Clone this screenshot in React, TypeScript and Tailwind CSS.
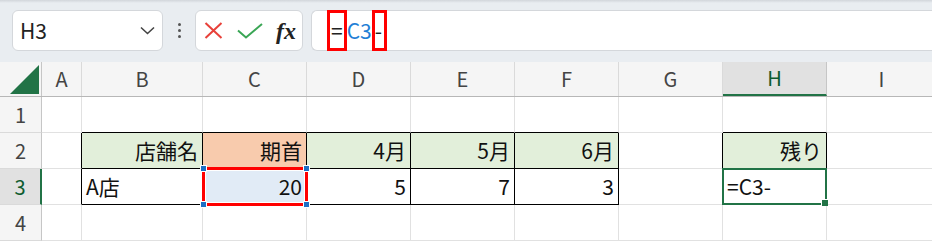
import React from "react";

const COLS = [
  { key: "A", w: "w-[40px]" },
  { key: "B", w: "w-[121px]" },
  { key: "C", w: "w-[104px]" },
  { key: "D", w: "w-[104px]" },
  { key: "E", w: "w-[104px]" },
  { key: "F", w: "w-[104px]" },
  { key: "G", w: "w-[104px]" },
  { key: "H", w: "w-[104px]" },
  { key: "I", w: "w-[110px]" },
];

type Cell = { text?: string; align?: "left" | "right"; fill?: string };

const DATA: Record<string, Cell> = {
  B2: { text: "店舗名", align: "right", fill: "bg-[#e2efda]" },
  C2: { text: "期首", align: "right", fill: "bg-[#f8cbad]" },
  D2: { text: "4月", align: "right", fill: "bg-[#e2efda]" },
  E2: { text: "5月", align: "right", fill: "bg-[#e2efda]" },
  F2: { text: "6月", align: "right", fill: "bg-[#e2efda]" },
  H2: { text: "残り", align: "right", fill: "bg-[#e2efda]" },
  B3: { text: "A店", align: "left" },
  C3: { text: "20", align: "right", fill: "bg-[#e1ebf6]" },
  D3: { text: "5", align: "right" },
  E3: { text: "7", align: "right" },
  F3: { text: "3", align: "right" },
  H3: { text: "=C3-", align: "left" },
};

const inTable = (row: number, col: number) => {
  const k = COLS[col]?.key;
  if (!k) return false;
  if (row === 2 || row === 3) return ["B", "C", "D", "E", "F", "H"].includes(k);
  return false;
};

const Handle = ({ pos }: { pos: string }) => (
  <span className={`absolute w-[7px] h-[7px] bg-[#1e6fc5] border border-white ${pos}`} />
);

function NameBox() {
  return (
    <div className="w-[151px] shrink-0 h-[41px] bg-white rounded-[6px] border border-[#d4d7db] flex items-center pl-[7px] pr-[7px]">
      <span className="text-[21px] text-[#222] flex-1">H3</span>
      <svg width="15" height="9" viewBox="0 0 15 9" fill="none">
        <path d="M1 1.5 L7.5 7.5 L14 1.5" stroke="#444" strokeWidth="1.6" />
      </svg>
    </div>
  );
}

function FormulaButtons() {
  return (
    <div className="w-[108px] shrink-0 h-[41px] bg-white rounded-[6px] border border-[#d4d7db] flex items-center pl-[8px] gap-[14px]">
      <svg width="19" height="17" viewBox="0 0 19 17" fill="none">
        <path d="M1.5 1 L17.5 16 M17.5 1 L1.5 16" stroke="#e8413a" strokeWidth="2" />
      </svg>
      <svg width="26" height="16" viewBox="0 0 26 16" fill="none">
        <path d="M1 7.5 L9 14.5 L25 1" stroke="#3aa655" strokeWidth="2" />
      </svg>
      <span
        className="text-[24px] italic font-bold text-[#222] leading-none -ml-[1px]"
        style={{ fontFamily: '"Liberation Serif", serif' }}
      >
        fx
      </span>
    </div>
  );
}

function FormulaBar() {
  return (
    <div className="flex-1 h-[41px] bg-white rounded-l-[6px] border border-r-0 border-[#d4d7db] flex items-stretch pl-[15px] text-[21px] -mr-[4px]">
      <span className="flex items-center border-[3px] border-[#ff0000] px-[1px] -my-[1px] text-[#222]">=</span>
      <span className="flex items-center text-[#1f7fd6]">C3</span>
      <span className="flex items-center border-[3px] border-[#ff0000] -my-[1px] pr-[2px] text-[#222]">-</span>
    </div>
  );
}

export default function App() {
  const rows = [1, 2, 3, 4];
  return (
    <div
      className="w-[932px] h-[242px] overflow-hidden bg-white"
      style={{ fontFamily: '"Noto Sans CJK JP", "Noto Sans", sans-serif' }}
    >
      {/* toolbar */}
      <div className="h-[62px] bg-[#e9edf1] relative overflow-hidden">
        <div className="h-[3px] bg-gradient-to-b from-[#d2d6db] to-[#e9edf1]" />
        <div className="flex items-center pl-[12px] pt-[7px]">
          <NameBox />
          <div className="w-[32px] shrink-0 flex flex-col items-center gap-[3px]">
            <span className="w-[3px] h-[3px] rounded-full bg-[#555]" />
            <span className="w-[3px] h-[3px] rounded-full bg-[#555]" />
            <span className="w-[3px] h-[3px] rounded-full bg-[#555]" />
          </div>
          <FormulaButtons />
          <div className="w-[8px] shrink-0" />
          <FormulaBar />
        </div>
      </div>

      {/* column header */}
      <div className="flex h-[35px] bg-[#f5f5f5] border-b border-[#b7b7b7]">
        <div className="w-[42px] shrink-0 h-full border-r border-[#c6c6c6] flex items-end justify-end pr-[2px] pb-[2px]">
          <svg width="29" height="29" viewBox="0 0 29 29">
            <path d="M29 0 L29 29 L0 29 Z" fill="#217346" />
          </svg>
        </div>
        {COLS.map((c) =>
          c.key === "H" ? (
            <div
              key={c.key}
              className={`${c.w} shrink-0 h-full bg-[#e1e1e1] border-r border-[#c6c6c6] border-b-2 border-b-[#217346] flex items-center justify-center text-[20px] text-[#0e5c2f]`}
            >
              {c.key}
            </div>
          ) : (
            <div
              key={c.key}
              className={`${c.w} shrink-0 h-full border-r border-[#dadada] flex items-center justify-center text-[20px] text-[#444]`}
            >
              {c.key}
            </div>
          )
        )}
      </div>

      {/* rows */}
      {rows.map((r) => (
        <div key={r} className="flex h-[36px]">
          {r === 3 ? (
            <div className="w-[42px] shrink-0 h-full bg-[#e1e1e1] border-r-2 border-r-[#217346] border-b border-b-[#dadada] flex items-center justify-center text-[20px] text-[#0e5c2f]">
              {r}
            </div>
          ) : (
            <div className="w-[42px] shrink-0 h-full bg-[#f5f5f5] border-r border-r-[#c6c6c6] border-b border-b-[#dadada] flex items-center justify-center text-[20px] text-[#444]">
              {r}
            </div>
          )}
          {COLS.map((c, ci) => {
            const id = `${c.key}${r}`;
            const cell = DATA[id] || {};
            const rBlack = inTable(r, ci) || inTable(r, ci + 1);
            const bBlack = inTable(r, ci) || inTable(r + 1, ci);
            const rCls = rBlack ? "border-r-black" : "border-r-[#e1e1e1]";
            const bCls = bBlack ? "border-b-black" : "border-b-[#e1e1e1]";
            const alignCls = cell.align === "right" ? "justify-end pr-[4px]" : "justify-start pl-[4px]";
            return (
              <div
                key={id}
                className={`${c.w} shrink-0 h-full relative border-r border-b ${rCls} ${bCls} ${cell.fill || "bg-white"} flex items-center ${alignCls} text-[21px] text-[#111]`}
              >
                <span className="leading-none">{cell.text}</span>
                {id === "C3" && (
                  <div className="absolute z-10 -top-[2px] -left-[1px] -right-[2px] -bottom-[2px] border-[3px] border-[#ff0000] shadow-[inset_0_0_0_1px_#fff] pointer-events-none">
                    <Handle pos="-top-[5px] -left-[5px]" />
                    <Handle pos="-top-[5px] -right-[5px]" />
                    <Handle pos="-bottom-[5px] -left-[5px]" />
                    <Handle pos="-bottom-[5px] -right-[5px]" />
                  </div>
                )}
                {id === "H3" && (
                  <div className="absolute z-10 -top-[1px] -left-[1px] -right-[1px] -bottom-[1px] border-2 border-[#217346] pointer-events-none">
                    <span className="absolute -right-[3px] -bottom-[3px] w-[7px] h-[7px] bg-[#217346] border-l border-t border-white" />
                  </div>
                )}
              </div>
            );
          })}
        </div>
      ))}
    </div>
  );
}
